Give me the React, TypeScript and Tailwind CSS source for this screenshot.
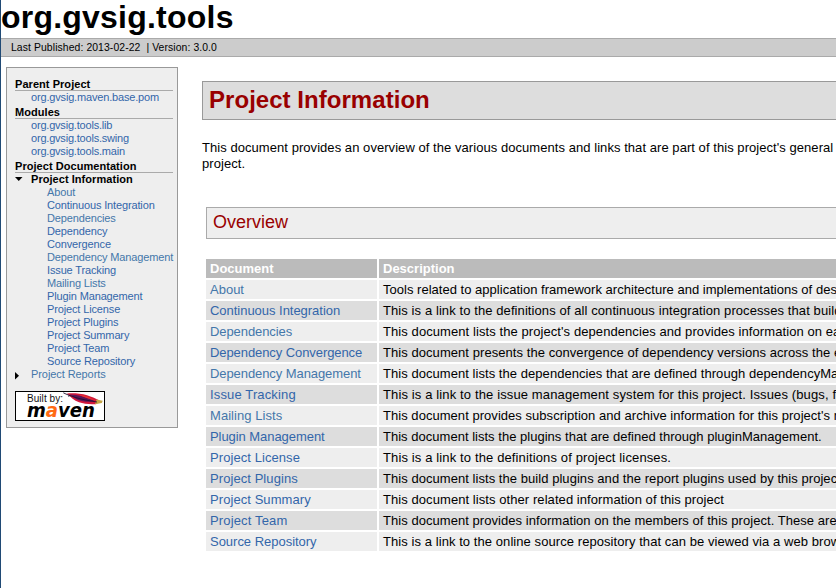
import React from "react";

type Doc = { name: string; visited?: boolean; nameTracking: string; text: string; tracking: string };

const docs: Doc[] = [
  { name: "About", visited: true, nameTracking: "", text: "Tools related to application framework architecture and implementations of design patterns", tracking: "tracking-[0.02px]" },
  { name: "Continuous Integration", nameTracking: "tracking-[-0.03px]", text: "This is a link to the definitions of all continuous integration processes that builds and tests code", tracking: "tracking-[0.09px]" },
  { name: "Dependencies", visited: true, nameTracking: "tracking-[-0.08px]", text: "This document lists the project's dependencies and provides information on each dependency.", tracking: "tracking-[0.08px]" },
  { name: "Dependency Convergence", nameTracking: "tracking-[-0.08px]", text: "This document presents the convergence of dependency versions across the entire project", tracking: "tracking-[0.06px]" },
  { name: "Dependency Management", visited: true, nameTracking: "tracking-[-0.08px]", text: "This document lists the dependencies that are defined through dependencyManagement.", tracking: "tracking-[0.05px]" },
  { name: "Issue Tracking", nameTracking: "tracking-[0.14px]", text: "This is a link to the issue management system for this project. Issues (bugs, features, change requests)", tracking: "tracking-[0.13px]" },
  { name: "Mailing Lists", visited: true, nameTracking: "tracking-[0.05px]", text: "This document provides subscription and archive information for this project's mailing lists.", tracking: "tracking-[0.04px]" },
  { name: "Plugin Management", nameTracking: "tracking-[-0.06px]", text: "This document lists the plugins that are defined through pluginManagement.", tracking: "tracking-[0.02px]" },
  { name: "Project License", nameTracking: "tracking-[0.07px]", text: "This is a link to the definitions of project licenses.", tracking: "tracking-[0.13px]" },
  { name: "Project Plugins", nameTracking: "tracking-[0.07px]", text: "This document lists the build plugins and the report plugins used by this project.", tracking: "tracking-[0.05px]" },
  { name: "Project Summary", nameTracking: "tracking-[0.07px]", text: "This document lists other related information of this project", tracking: "tracking-[0.07px]" },
  { name: "Project Team", nameTracking: "tracking-[0.15px]", text: "This document provides information on the members of this project. These are the individuals", tracking: "tracking-[0.05px]" },
  { name: "Source Repository", nameTracking: "tracking-[-0.02px]", text: "This is a link to the online source repository that can be viewed via a web browser.", tracking: "tracking-[0.07px]" },
];

function NavHeading({ children }: { children: React.ReactNode }) {
  return <h5 className="h-[15px] border-b border-[#aaaaaa] pt-[2px] font-bold tracking-[0.05px] text-black">{children}</h5>;
}

function MavenBadge() {
  return (
    <svg className="mt-[10px] block" width="90" height="30" viewBox="0 0 90 30">
      <rect x="0.5" y="0.5" width="89" height="29" fill="#fff" stroke="#000" />
      <text x="12" y="10.500" fontSize="10" letterSpacing="0" fontFamily="'Liberation Sans', Arial, sans-serif" fill="#111" textLength="36">Built by:</text>
      <text x="12" y="25.5" fontSize="19" letterSpacing="0" fontWeight="700" fontStyle="italic" fontFamily="'DejaVu Sans', 'Open Sans', sans-serif" fill="#000" textLength="68" lengthAdjust="spacingAndGlyphs">
        m<tspan fill="#ff6a14">a</tspan>ven
      </text>
      <path d="M52 2.500C58 2 66 2.500 72 4.300C77 5.800 80 7.500 83.500 9L82 13C76 13.700 69 13 64 11.300C59 9.500 56 6.500 52 2.500Z" fill="#d3183c" />
      <path d="M55 3.500C63 3.800 71 6 79 9.800C77 11.500 68 11 62 8.500C59 7 57 5 55 3.500Z" fill="#5b1458" />
      <path d="M64 3.800C71 4.500 76 7 80 9C75 8.500 70 7 64 3.800Z" fill="#e8332e" />
      <path d="M81.500 8.500L87.700 9.800L86.800 12L80 13.200Z" fill="#c4a545" />
      <path d="M48.300 1.800C55 5 64 8.300 82 11M53 5.200L55.500 4.500" fill="none" stroke="#20102f" strokeWidth="0.9" />
    </svg>
  );
}

export default function App() {
  return (
    <div className="h-[588px] w-[836px] overflow-hidden border-l border-[#204a75] bg-white font-['Liberation_Sans',Arial,sans-serif] text-black">
      <header className="h-[38px]">
        <h1 className="text-[32px] leading-[34px] font-bold tracking-[0.22px] whitespace-nowrap">org.gvsig.tools</h1>
      </header>
      <div className="h-[19px] border-y border-[#aaaaaa] bg-[#cccccc] pl-[10px] text-[10.4px] leading-[17px] tracking-[0.09px] whitespace-pre">
        {"Last Published: 2013-02-22\u00a0 | Version: 3.0.0"}
      </div>
      <div className="flex items-start">
        <nav className="mt-[10px] ml-[5px] h-[361px] w-[172px] shrink-0 border border-[#999999] bg-[#eeeeee] pt-[8px] pr-[4px] pl-[8px] text-[11px] leading-[13px] tracking-[-0.14px] whitespace-nowrap text-[#3366aa]">
          <NavHeading>Parent Project</NavHeading>
          <ul className="pl-4 tracking-[-0.17px]">
            <li>org.gvsig.maven.base.pom</li>
          </ul>
          <NavHeading>Modules</NavHeading>
          <ul className="pl-4 tracking-[-0.2px]">
            <li>org.gvsig.tools.lib</li>
            <li>org.gvsig.tools.swing</li>
            <li>org.gvsig.tools.main</li>
          </ul>
          <NavHeading>Project Documentation</NavHeading>
          <div className="flex font-bold tracking-[0.05px] text-black">
            <svg width="16" height="13" viewBox="0 0 16 13"><path d="M0 4H7.500L3.750 8Z" fill="#000" /></svg>
            Project Information
          </div>
          <ul className="pl-8">
            {docs.map((d) => (
              <li key={d.name} className={d.visited ? "text-[#4477aa]" : ""}>
                {d.name === "Dependency Convergence" ? <>Dependency<br />Convergence</> : d.name}
              </li>
            ))}
          </ul>
          <div className="flex tracking-[-0.08px] text-[#4477aa]">
            <svg width="16" height="13" viewBox="0 0 16 13"><path d="M0 4V11.500L4 7.750Z" fill="#000" /></svg>
            Project Reports
          </div>
          <MavenBadge />
        </nav>
        <main className="mt-[24px] ml-[24px] w-[900px] shrink-0">
          <h2 className="h-[39px] border border-[#999999] bg-[#dddddd] pl-[6px] text-[24px] leading-[36px] font-bold tracking-[0.04px] text-[#990000]">
            Project Information
          </h2>
          <p className="mt-[20px] text-[13px] leading-[16px] tracking-[0.054px] whitespace-nowrap">
            This document provides an overview of the various documents and links that are part of this project's general
            <br />
            project.
          </p>
          <section className="mt-[35px] ml-[4px]">
            <h3 className="h-[32px] border border-[#aaaaaa] bg-[#eeeeee] pl-[6px] text-[18px] leading-[29px] text-[#990000]">Overview</h3>
            <div className="mt-[20px] grid grid-cols-[171px_1fr] gap-[2px] text-[13px] leading-[19px] whitespace-nowrap">
              <div className="bg-[#bbbbbb] pl-1 font-bold text-white">Document</div>
              <div className="bg-[#bbbbbb] pl-1 font-bold text-white">Description</div>
              {docs.map((d, i) => {
                const bg = i % 2 ? "bg-[#dddddd]" : "bg-[#eeeeee]";
                return (
                  <React.Fragment key={d.name}>
                    <div className={`pl-1 ${bg} ${d.nameTracking} ${d.visited ? "text-[#4477aa]" : "text-[#3366aa]"}`}>{d.name}</div>
                    <div className={`pl-1 ${bg} ${d.tracking}`}>{d.text}</div>
                  </React.Fragment>
                );
              })}
            </div>
          </section>
        </main>
      </div>
    </div>
  );
}
